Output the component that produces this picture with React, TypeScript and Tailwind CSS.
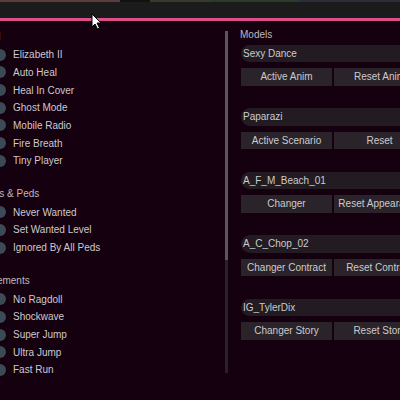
import React from "react";

const sections = [
  {
    title: "General",
    shift: "ml-[-35px]",
    items: ["Elizabeth II", "Auto Heal", "Heal In Cover", "Ghost Mode", "Mobile Radio", "Fire Breath", "Tiny Player"],
  },
  {
    title: "Cops & Peds",
    shift: "ml-[-19px]",
    items: ["Never Wanted", "Set Wanted Level", "Ignored By All Peds"],
  },
  {
    title: "Movements",
    shift: "ml-[-22px]",
    items: ["No Ragdoll", "Shockwave", "Super Jump", "Ultra Jump", "Fast Run"],
  },
];

const models = [
  { name: "Sexy Dance", left: "Active Anim", right: "Reset Anim" },
  { name: "Paparazi", left: "Active Scenario", right: "Reset" },
  { name: "A_F_M_Beach_01", left: "Changer", right: "Reset Appearance" },
  { name: "A_C_Chop_02", left: "Changer Contract", right: "Reset Contract" },
  { name: "IG_TylerDix", left: "Changer Story", right: "Reset Story" },
];

function Toggle({ label }: { label: string }) {
  return (
    <div className="flex items-center h-[17.65px] gap-[7px]">
      <div className="ml-[-6px] w-[12px] h-[12px] rounded-full bg-[#3b4a54] shrink-0" />
      <span className="whitespace-nowrap">{label}</span>
    </div>
  );
}

export default function App() {
  return (
    <div
      className="relative w-[400px] h-[400px] overflow-hidden bg-[#14000f] text-[10px] text-[#cdcacd]"
      style={{ fontFamily: '"Liberation Sans", Arial, sans-serif' }}
    >
      {/* game window strip above the menu */}
      <div className="h-[18px] bg-[#1b1b1b] flex flex-col">
        <div className="h-[2px] flex">
          <div className="w-[120px] bg-[#5a3c3c]" />
          <div className="w-[30px] bg-[#111]" />
          <div className="w-[60px] bg-[#3a3a2a]" />
          <div className="w-[90px] bg-[#2c3a2a]" />
          <div className="flex-1 bg-[#2a2c3a]" />
        </div>
      </div>
      <div className="h-[3px] bg-[#dc4f8c]" />

      <div className="flex">
        {/* left column */}
        <div className="w-[225px] shrink-0 pt-[5px] flex flex-col gap-[14px]">
          {sections.map((s) => (
            <div key={s.title} className="flex flex-col">
              <div className="h-[20px] flex items-center">
                <span className={`${s.shift} whitespace-nowrap text-[#bdb9bd]`}>{s.title}</span>
              </div>
              {s.items.map((it) => (
                <Toggle key={it} label={it} />
              ))}
            </div>
          ))}
        </div>

        {/* scrollbar */}
        <div className="mt-[10px] w-[3px] shrink-0 h-[342px] bg-[#2a2028] flex flex-col">
          <div className="h-[229px] bg-[#5c565b]" />
        </div>

        {/* right column */}
        <div className="ml-[13px] w-[184px] shrink-0 pt-[4px] flex flex-col">
          <div className="h-[18px] flex items-center ml-[-1px] text-[#bdb9bd]">Models</div>
          <div className="mt-[1.5px] flex flex-col gap-[22.5px]">
            {models.map((m) => (
              <div key={m.name} className="flex flex-col gap-[6px]">
                <div className="h-[17.5px] rounded-l-[9px] bg-[#221b21] flex items-center pl-[2px] whitespace-nowrap">
                  {m.name}
                </div>
                <div className="grid grid-cols-2 gap-[2px]">
                  <div className="h-[17.5px] bg-[#2a2329] flex items-center justify-center whitespace-nowrap">
                    {m.left}
                  </div>
                  <div className="h-[17.5px] bg-[#2a2329] flex items-center justify-center whitespace-nowrap">
                    {m.right}
                  </div>
                </div>
              </div>
            ))}
          </div>
        </div>
      </div>

      {/* mouse cursor */}
      <svg className="absolute left-[91px] top-[13px]" width="11" height="17" viewBox="0 0 11 17">
        <path d="M1 1 L1 14 L4 11 L6.5 16 L8.5 15 L6 10 L10 10 Z" fill="#fff" stroke="#000" strokeWidth="1" />
      </svg>
    </div>
  );
}
